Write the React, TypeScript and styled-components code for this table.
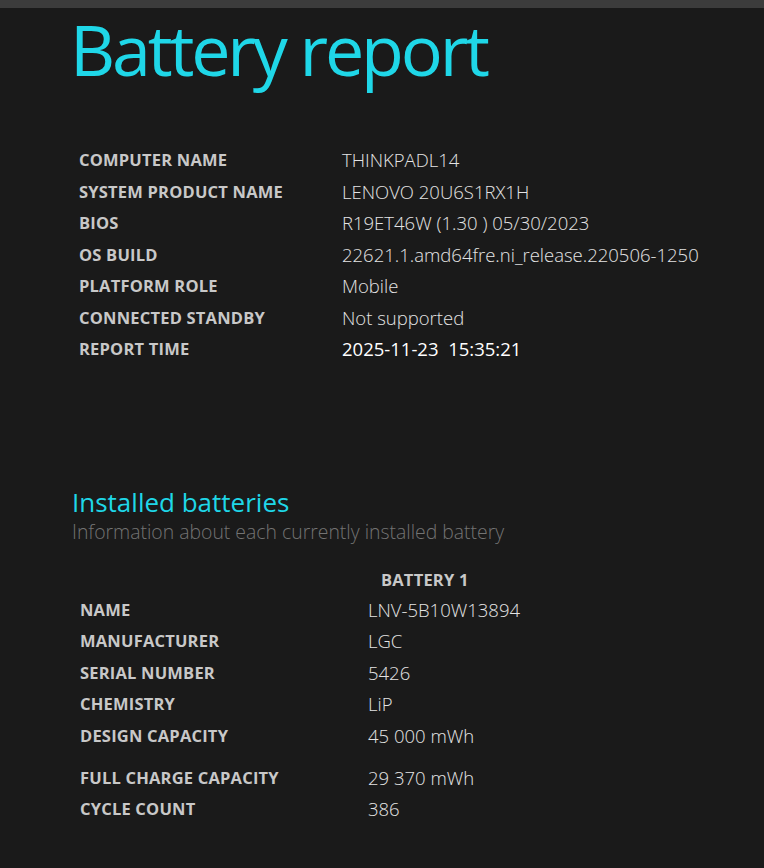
import { Fragment } from 'react';
import styled, { createGlobalStyle } from 'styled-components';

const GlobalStyle = createGlobalStyle`
  html, body {
    margin: 0;
    padding: 0;
    background: #1a1a1a;
  }
  body {
    font-family: 'Open Sans', 'Noto Sans', sans-serif;
  }
`;

const Page = styled.div`
  width: 764px;
  height: 868px;
  background: #1a1a1a;
  overflow: hidden;
`;

const TopBar = styled.div`
  height: 8px;
  background: #3c3c3c;
`;

const Content = styled.main`
  padding: 0 0 0 72px;
`;

const Title = styled.h1`
  margin: -4px 0 0 -2px;
  font-size: 70px;
  font-weight: 400;
  line-height: 90px;
  color: #1fd7e8;
  letter-spacing: -3.2px;
`;

const InfoTable = styled.div<{ $labelWidth: number; $indent: number; $top?: number }>`
  display: grid;
  grid-template-columns: ${(p) => p.$labelWidth}px auto;
  align-items: center;
  padding-left: ${(p) => p.$indent}px;
  margin-top: ${(p) => p.$top ?? 0}px;
`;

const Label = styled.div`
  font-size: 16.5px;
  line-height: 31.5px;
  font-weight: 700;
  color: #c8c8c8;
  letter-spacing: 0.2px;
  text-transform: uppercase;
`;

const Value = styled.div<{ $bright?: boolean }>`
  font-size: 18.5px;
  line-height: 31.5px;
  font-weight: ${(p) => (p.$bright ? 400 : 300)};
  color: ${(p) => (p.$bright ? '#ffffff' : '#e4e4e4')};
  white-space: pre;
`;

const Spacer = styled.div<{ $h: number }>`
  grid-column: 1 / -1;
  height: ${(p) => p.$h}px;
`;

const Section = styled.section`
  margin-top: 120px;
`;

const SectionTitle = styled.h2`
  margin: 0;
  font-size: 26px;
  font-weight: 400;
  line-height: 34px;
  color: #1fd7e8;
`;

const SectionSub = styled.div`
  font-size: 19.4px;
  font-weight: 300;
  line-height: 26px;
  color: #737373;
`;

const BatteryHead = styled.div`
  padding-left: 309px;
  margin-top: 24px;
  margin-bottom: 3px;
  font-size: 16.5px;
  font-weight: 700;
  letter-spacing: 0.2px;
  color: #c8c8c8;
  line-height: 22px;
`;

const system = [
  ['Computer name', 'THINKPADL14'],
  ['System product name', 'LENOVO 20U6S1RX1H'],
  ['BIOS', 'R19ET46W (1.30 ) 05/30/2023'],
  ['OS build', '22621.1.amd64fre.ni_release.220506-1250'],
  ['Platform role', 'Mobile'],
  ['Connected standby', 'Not supported'],
];

const battery = [
  ['Name', 'LNV-5B10W13894'],
  ['Manufacturer', 'LGC'],
  ['Serial number', '5426'],
  ['Chemistry', 'LiP'],
  ['Design capacity', '45 000 mWh'],
];

export default function App() {
  return (
    <Page>
      <GlobalStyle />
      <TopBar />
      <Content>
        <Title>Battery report</Title>

        <InfoTable $labelWidth={263} $indent={7} $top={50}>
          {system.map(([k, v]) => (
            <Fragment key={k}>
              <Label>{k}</Label>
              <Value>{v}</Value>
            </Fragment>
          ))}
          <Label>Report time</Label>
          <Value $bright>{'2025-11-23  15:35:21'}</Value>
        </InfoTable>

        <Section>
          <SectionTitle>Installed batteries</SectionTitle>
          <SectionSub>Information about each currently installed battery</SectionSub>
          <BatteryHead>BATTERY 1</BatteryHead>
          <InfoTable $labelWidth={288} $indent={8}>
            {battery.map(([k, v]) => (
              <Fragment key={k}>
                <Label>{k}</Label>
                <Value>{v}</Value>
              </Fragment>
            ))}
            <Spacer $h={10.5} />
            <Label>Full charge capacity</Label>
            <Value>29 370 mWh</Value>
            <Label>Cycle count</Label>
            <Value>386</Value>
          </InfoTable>
        </Section>
      </Content>
    </Page>
  );
}
